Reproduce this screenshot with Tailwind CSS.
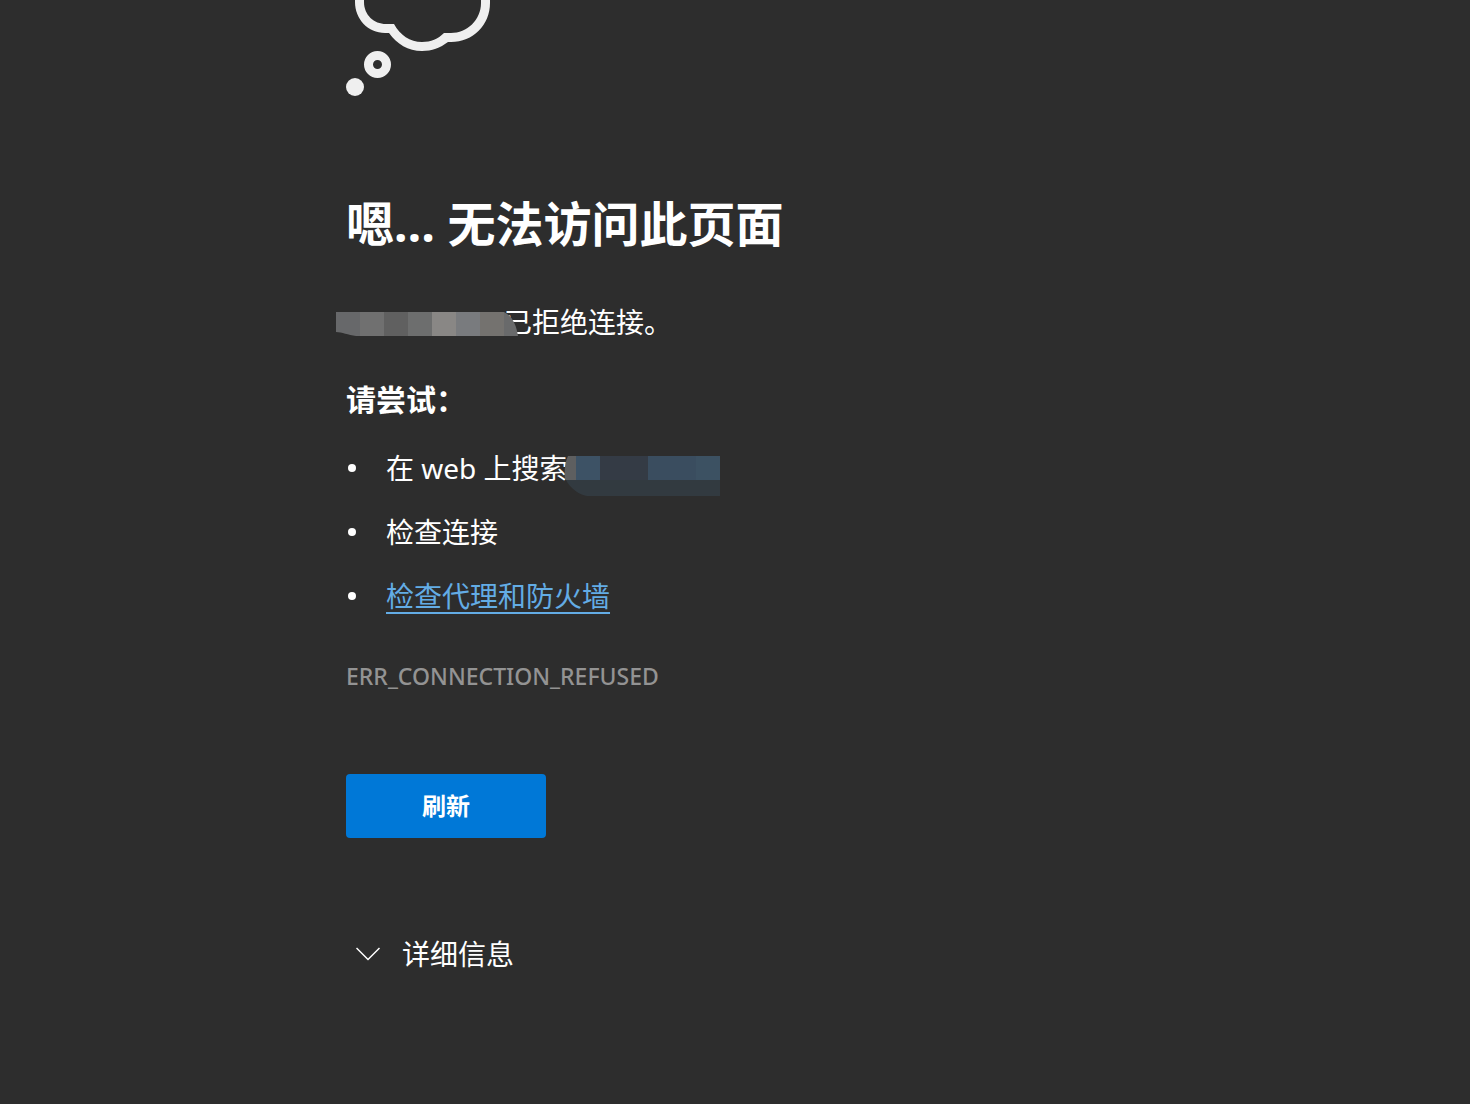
<!DOCTYPE html>
<html lang="zh-CN">
<head>
  <meta charset="UTF-8" />
  <meta name="viewport" content="width=device-width, initial-scale=1.0" />
  <title>无法访问此页面</title>
  <script src="https://cdn.jsdelivr.net/npm/@tailwindcss/browser@4"></script>
</head>
<body class="bg-[#2d2d2d] min-h-screen text-white text-[28px] leading-10 font-['Noto_Sans','Noto_Sans_CJK_SC',sans-serif]">

  <main class="pl-[346px] pr-6 pb-12">

    <!-- Thought bubble -->
    <svg class="block w-36 h-24" viewBox="0 0 144 96" fill="#efefef" aria-hidden="true">
      <path d="M9 0V2C9 19 22 33 39 33H43C51 44 62 51 76 51C86 51 94 48 102 42H105C127 42 144 25 144 3V0H135V3C135 20 121 33 105 33H98C92 39 85 42 76 42C64 42 54 35 48 24H40C28 24 18 15 18 2V0Z" />
      <path fill-rule="evenodd" d="M31.500 51a13.500 13.500 0 1 0 0 27a13.500 13.500 0 1 0 0-27ZM31.500 60a4.500 4.500 0 1 1 0 9a4.500 4.500 0 1 1 0-9Z" />
      <circle cx="9" cy="87" r="9" />
    </svg>

    <h1 class="mt-24 text-5xl leading-16 font-bold">嗯… 无法访问此页面</h1>

    <p class="relative mt-[46px] pl-[158px]">
      已拒绝连接。
      <!-- Hidden host name -->
      <svg class="absolute top-[10px] -left-[10px] w-[182px] h-6" viewBox="0 0 182 24" aria-hidden="true">
        <path fill="#67686a" d="M0 0H24V24H20C12 23 6 20 0 20Z" />
        <path fill="#707070" d="M24 0H48V24H24Z" />
        <path fill="#606060" d="M48 0H72V24H48Z" />
        <path fill="#6d6e6e" d="M72 0H96V24H72Z" />
        <path fill="#898785" d="M96 0H120V24H96Z" />
        <path fill="#797b7e" d="M120 0H144V24H120Z" />
        <path fill="#74726f" d="M144 0H168V24H144Z" />
        <path fill="#696a6b" d="M168 0C176 4 180 12 182 24H168Z" />
      </svg>
    </p>

    <h2 class="mt-[38px] text-[30px] font-bold">请尝试：</h2>

    <ul class="mt-7 flex flex-col gap-6">
      <li class="flex items-center">
        <span class="w-10 shrink-0"><span class="block size-2 ml-[2px] rounded-full bg-white"></span></span>
        <span class="relative">
          在 web 上搜索
          <!-- Hidden search link -->
          <svg class="absolute top-2 -right-[152px] w-40 h-10" viewBox="0 0 160 40" aria-hidden="true">
            <path fill="#323a40" d="M6 24H160V40H34C26 42 12 36 6 24Z" />
            <path fill="#5e5f60" d="M8 0H16V24H5C4 15 5 6 8 0Z" />
            <path fill="#3d5265" d="M16 0H40V24H16Z" />
            <path fill="#343b45" d="M40 0H88V24H40Z" />
            <path fill="#3a4d5f" d="M88 0H136V24H88Z" />
            <path fill="#3c5162" d="M136 0H160V24H136Z" />
          </svg>
        </span>
      </li>
      <li class="flex items-center">
        <span class="w-10 shrink-0"><span class="block size-2 ml-[2px] rounded-full bg-white"></span></span>
        <span>检查连接</span>
      </li>
      <li class="flex items-center">
        <span class="w-10 shrink-0"><span class="block size-2 ml-[2px] rounded-full bg-white"></span></span>
        <a href="#" class="text-[#63ace5] underline decoration-2 underline-offset-[5px]">检查代理和防火墙</a>
      </li>
    </ul>

    <p class="mt-10 text-[23px] leading-10 font-medium text-[#939393]">ERR_CONNECTION_REFUSED</p>

    <button type="button" class="mt-[78px] block w-50 h-16 rounded bg-[#0078d7] text-2xl font-bold">刷新</button>

    <button type="button" class="mt-24 flex items-center gap-[22px] pl-[10px]">
      <svg class="w-6 h-4" viewBox="0 0 24 16" fill="none" stroke="#ffffff" stroke-width="1.5" aria-hidden="true">
        <path d="M0.500 2L12 13.500L23.500 2" />
      </svg>
      详细信息
    </button>

  </main>

</body>
</html>
